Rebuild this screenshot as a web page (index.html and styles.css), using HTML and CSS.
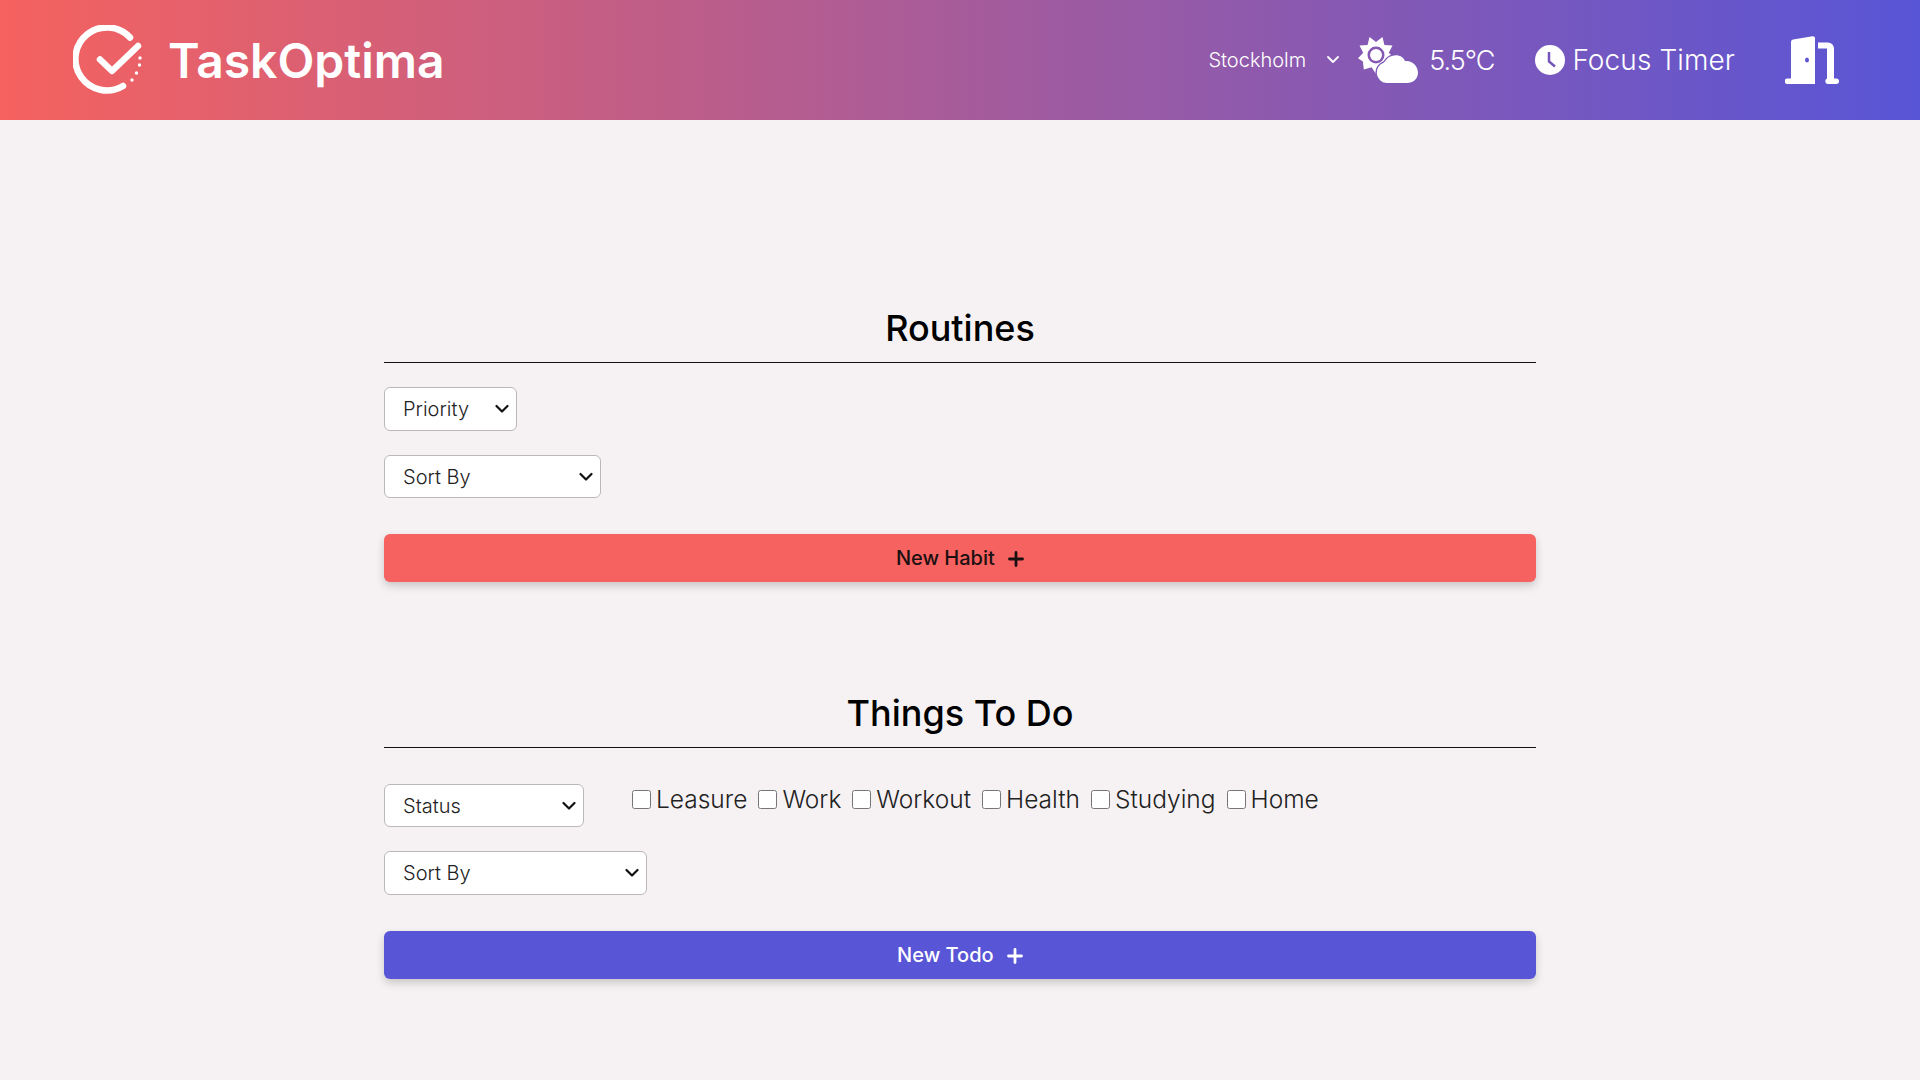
FILE: index.html
```html
<!DOCTYPE html>
<html lang="en">
<head>
<meta charset="utf-8">
<title>TaskOptima</title>
<link rel="stylesheet" href="styles.css">
</head>
<body>
<header class="topbar">
  <div class="brand">
    <svg class="brand-logo" viewBox="0 0 70 70" width="70" height="70" fill="none" stroke="#fff" stroke-linecap="round" stroke-linejoin="round">
      <path d="M57 12.500A31.500 31.500 0 1 0 50 61" stroke-width="6.500"/>
      <path d="M27 34.500L39 46 65 21" stroke-width="6.500"/>
      <g fill="#fff" stroke="none"><circle cx="67" cy="33" r="1.700"/><circle cx="66.500" cy="40" r="1.700"/><circle cx="63.500" cy="48" r="1.700"/><circle cx="59" cy="55" r="1.700"/></g>
    </svg>
    <span class="brand-name">TaskOptima</span>
  </div>
  <nav class="tools">
    <span class="city">Stockholm</span>
    <svg class="chev" viewBox="0 0 14 10" width="14" height="10" fill="none" stroke="#fff" stroke-width="1.800" stroke-linecap="round" stroke-linejoin="round"><path d="M2 2l5 5 5-5"/></svg>
    <svg class="weather" viewBox="0 0 60 48" width="60" height="48" fill="#fff">
      <path fill-rule="evenodd" d="M11.500 1.100L18 6l6.500-4.900 1.900 7.900 8.100.5-3.700 7.200 5.900 5.600-7.400 3.200-.9 8.100-7.800-2.400L18 38l-4.400-6.800-7.800 2.400-.9-8.100L0 22.300l5.200-5.600L1.500 9.500 9.600 9zM18 10.500a8.500 8.500 0 1 0 0 17 8.500 8.500 0 0 0 0-17z"/>
      <circle cx="18" cy="19" r="6"/>
      <path d="M29 47a10.500 10.500 0 0 1-3-20.500c1-1 4-6 8-6.500 5-2 11 0 13 5 7-1 13 5 13 11.500C60 43 55 47 49 47z" stroke="#7c58b8" stroke-width="2.500" paint-order="stroke"/>
    </svg>
    <span class="temp">5.5°C</span>
    <span class="timer">
      <svg viewBox="0 0 30 30" width="30" height="30"><circle cx="15" cy="15" r="15" fill="#fff"/><path d="M14 7v9.500l6 5" fill="none" stroke="#7455bd" stroke-width="2.500"/></svg>
      <span class="timer-label">Focus Timer</span>
    </span>
    <svg class="door" viewBox="0 0 54 48" width="54" height="48" fill="#fff">
      <path fill-rule="evenodd" d="M6 6Q6 4 8 3.600L27.500.200Q30 0 30 2v46H2.500a2.800 2.800 0 0 1 0-5.600H6zM22 21.500a2 2.500 0 1 0 0 5 2 2.500 0 0 0 0-5z"/>
      <path d="M33 6.500h10a6 6 0 0 1 6 6v29.900h2.200a2.800 2.800 0 0 1 0 5.600H43a2.800 2.800 0 0 1-1-5.400V12.500h-9z"/>
    </svg>
  </nav>
</header>
<main class="content">
  <section class="group group-routines">
    <h2 class="title">Routines</h2>
    <div class="filter"><select class="pick pick-priority"><option>Priority</option></select></div>
    <div class="filter"><select class="pick pick-sort-a"><option>Sort By</option></select></div>
    <button class="add add-habit" type="button">New Habit <svg class="plus" viewBox="0 0 16 16" width="16" height="16"><path d="M8 1.500v13M1.500 8h13" fill="none" stroke="currentColor" stroke-width="2.800" stroke-linecap="round"/></svg></button>
  </section>
  <section class="group group-todos">
    <h2 class="title">Things To Do</h2>
    <div class="filter filter-row">
      <select class="pick pick-status"><option>Status</option></select>
      <div class="checks">
        <label class="check"><input type="checkbox"><span>Leasure</span></label>
        <label class="check"><input type="checkbox"><span>Work</span></label>
        <label class="check"><input type="checkbox"><span>Workout</span></label>
        <label class="check"><input type="checkbox"><span>Health</span></label>
        <label class="check"><input type="checkbox"><span>Studying</span></label>
        <label class="check"><input type="checkbox"><span>Home</span></label>
      </div>
    </div>
    <div class="filter"><select class="pick pick-sort-b"><option>Sort By</option></select></div>
    <button class="add add-todo" type="button">New Todo <svg class="plus" viewBox="0 0 16 16" width="16" height="16"><path d="M8 1.500v13M1.500 8h13" fill="none" stroke="currentColor" stroke-width="2.800" stroke-linecap="round"/></svg></button>
  </section>
</main>
</body>
</html>
```
FILE: styles.css
```css
* { box-sizing: border-box; }
html, body { margin: 0; height: 100%; }
body {
  background: #f6f2f4;
  font-family: "Inter", "Noto Sans", sans-serif;
  color: #111;
  overflow: hidden;
}
.topbar {
  height: 120px;
  display: flex;
  align-items: center;
  justify-content: space-between;
  padding: 0 81px 0 73px;
  background: linear-gradient(90deg, #f5625f 0%, #5855d6 100%);
  color: #fff;
}
.brand { display: flex; align-items: center; gap: 25px; }
.brand-logo { display: block; }
.brand-name { font-size: 48px; font-weight: 600; }
.tools { display: flex; align-items: center; }
.city { font-size: 20px; font-weight: 300; }
.chev { margin-left: 20px; }
.weather { margin-left: 18px; }
.temp { font-size: 27px; font-weight: 300; margin-left: 11px; letter-spacing: -1px; }
.timer { display: flex; align-items: center; gap: 7px; margin-left: 41px; }
.timer svg { display: block; }
.timer-label { font-size: 28px; font-weight: 300; letter-spacing: .1px; }
.door { margin-left: 50px; }
.content { width: 1152px; margin: 0 auto; }
.group-routines { padding-top: 186px; }
.group-todos { padding-top: 109px; }
.title {
  margin: 0 0 24px;
  height: 57px;
  line-height: 44px;
  border-bottom: 1px solid #111;
  font-size: 36px;
  font-weight: 500;
  text-align: center;
  color: #000;
}
.filter { margin-bottom: 24px; display: flex; }
.pick {
  appearance: none;
  height: 44px;
  padding: 0 28px 0 18px;
  background: #fff url("data:image/svg+xml,%3Csvg xmlns='http://www.w3.org/2000/svg' viewBox='0 0 14 10'%3E%3Cpath d='M1.500 2l5.500 5.500L12.500 2' fill='none' stroke='%23111' stroke-width='2.200' stroke-linecap='round' stroke-linejoin='round'/%3E%3C/svg%3E") no-repeat right 7px center / 14px 10px;
  border: 1px solid #bcb8ba;
  border-radius: 6px;
  font: 300 20px "Inter", sans-serif;
  color: #222;
}
.pick-priority { width: 133px; }
.pick-sort-a { width: 217px; height: 43px; }
.pick-status { width: 200px; height: 43px; }
.pick-sort-b { width: 263px; }
.filter-row { align-items: flex-start; margin-top: 36px; }
.checks { display: flex; margin-left: 48px; gap: 11px; }
.check { display: flex; align-items: center; gap: 5px; font-size: 24.500px; font-weight: 300; color: #222; height: 30px; }
.check input { width: 19px; height: 19px; margin: 0; }
.add {
  display: block;
  width: 100%;
  height: 48px;
  margin-top: 36px;
  border: 0;
  border-radius: 6px;
  font: 500 20px "Inter", sans-serif;
  box-shadow: 0 4px 8px rgba(0,0,0,.18);
}
.plus { margin-left: 8px; vertical-align: -2px; }
.add-habit { background: #f5625f; color: #1a1012; }
.add-todo { background: #5855d6; color: #fff; }
```
